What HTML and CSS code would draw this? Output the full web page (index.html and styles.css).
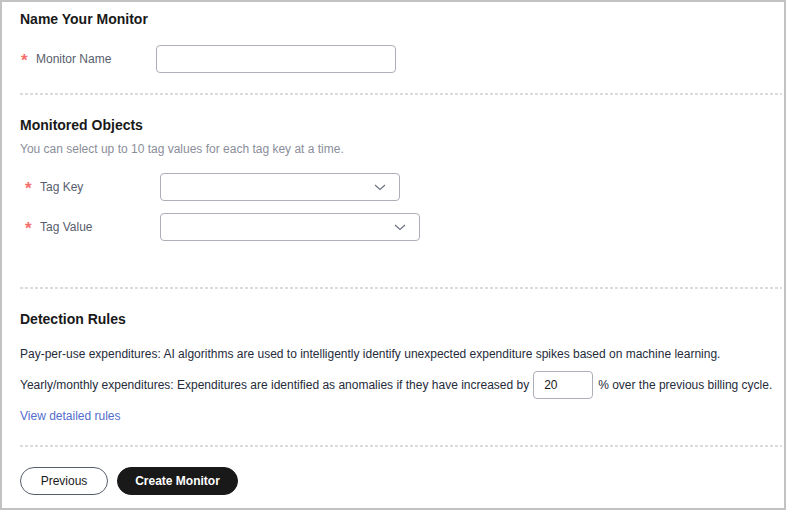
FILE: index.html
```html
<!DOCTYPE html>
<html>
<head>
<meta charset="utf-8">
<link rel="stylesheet" href="styles.css">
</head>
<body>
<div class="frame">
  <section class="sec sec-name">
    <h2 class="title">Name Your Monitor</h2>
    <div class="row row-name">
      <label class="label"><span class="req">*</span>Monitor Name</label>
      <div class="input w240"></div>
    </div>
  </section>
  <div class="dash"></div>
  <section class="sec sec-obj">
    <h2 class="title">Monitored Objects</h2>
    <p class="help">You can select up to 10 tag values for each tag key at a time.</p>
    <div class="rows">
      <div class="row row-tag">
        <label class="label"><span class="req">*</span>Tag Key</label>
        <div class="input select w240">
          <svg class="chev" width="12" height="7" viewBox="0 0 12 7"><path d="M1 1 L6 5.5 L11 1" fill="none" stroke="#6c7280" stroke-width="1.2"/></svg>
        </div>
      </div>
      <div class="row row-tag">
        <label class="label"><span class="req">*</span>Tag Value</label>
        <div class="input select w260">
          <svg class="chev" width="12" height="7" viewBox="0 0 12 7"><path d="M1 1 L6 5.5 L11 1" fill="none" stroke="#6c7280" stroke-width="1.2"/></svg>
        </div>
      </div>
    </div>
  </section>
  <div class="dash"></div>
  <section class="sec sec-rules">
    <h2 class="title">Detection Rules</h2>
    <p class="text t1">Pay-per-use expenditures: AI algorithms are used to intelligently identify unexpected expenditure spikes based on machine learning.</p>
    <div class="text t2">Yearly/monthly expenditures: Expenditures are identified as anomalies if they have increased by <span class="input num">20</span> % over the previous billing cycle.</div>
    <a class="link">View detailed rules</a>
  </section>
  <div class="dash"></div>
  <div class="actions">
    <button class="btn btn-sec">Previous</button>
    <button class="btn btn-pri">Create Monitor</button>
  </div>
</div>
</body>
</html>
```
FILE: styles.css
```css
* { box-sizing: border-box; }
html, body { margin: 0; padding: 0; background: #fff; }
body { font-family: "Liberation Sans", Arial, sans-serif; font-size: 12px; color: #252b3a; }
.frame {
  width: 786px; height: 510px;
  border: 2px solid #c2c2c2;
  padding: 7px 0 0 18px;
  overflow: hidden;
}
.title { margin: 0; font-size: 14px; font-weight: bold; line-height: 20px; color: #191919; }
.row { display: flex; align-items: center; height: 28px; }
.label { color: #575d6c; display: flex; align-items: center; width: 136px; flex: none; }
.req { color: #f66f6a; font-size: 17px; font-weight: bold; width: 16px; padding-left: 1px; line-height: 12px; position: relative; top: 2px; }
.input {
  height: 28px;
  border: 1px solid #adb0b8;
  border-radius: 4px;
  background: #fff;
}
.w240 { width: 240px; }
.w260 { width: 260px; }
.row-name { margin-top: 16px; margin-bottom: 20px; }
.dash {
  height: 2px;
  margin-right: 2px;
  background: repeating-linear-gradient(to right, #dcdcdc 0 3px, transparent 3px 5px);
}
.sec-obj { padding-top: 20px; padding-bottom: 46px; }
.help { margin: 5px 0 0; line-height: 18px; color: #8a8e99; }
.rows { margin-top: 15px; padding-left: 4px; display: flex; flex-direction: column; gap: 12px; }
.select { position: relative; display: flex; align-items: center; justify-content: flex-end; padding-right: 13px; }
.chev { display: block; }
.sec-rules { padding-top: 20px; padding-bottom: 20px; }
.text { line-height: 18px; margin: 0; }
.t1 { margin-top: 16px; }
.t2 { margin-top: 8px; display: flex; align-items: center; white-space: nowrap; }
.num { display: inline-flex; align-items: center; width: 60px; padding-left: 10px; margin: 0 5px 0 4px; color: #191919; }
.link { display: block; margin-top: 8px; line-height: 18px; color: #526ecc; cursor: pointer; }
.actions { display: flex; gap: 9px; padding-top: 20px; }
.btn {
  height: 28px; border-radius: 14px;
  font-family: "Liberation Sans", Arial, sans-serif; font-size: 12px;
  padding: 0; cursor: pointer;
}
.btn-sec { width: 88px; background: #fff; border: 1px solid #575d6c; color: #191919; }
.btn-pri { width: 121px; background: #191919; border: 1px solid #191919; color: #fff; font-weight: bold; }
```
